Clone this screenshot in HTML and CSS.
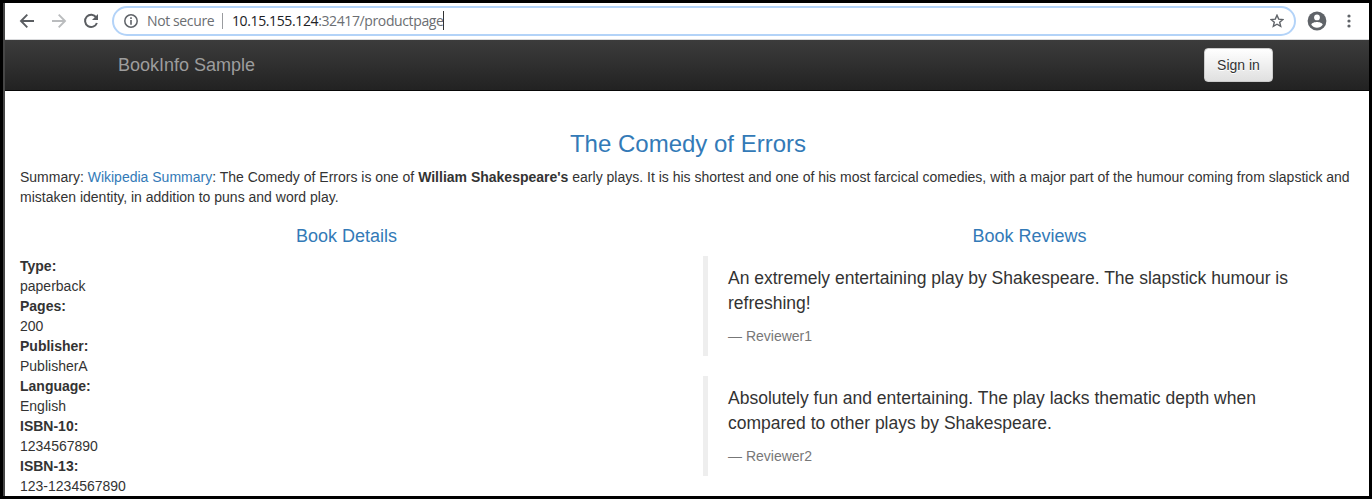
FILE: index.html
```html
<!DOCTYPE html>
<html lang="en">
<head>
<meta charset="utf-8">
<title>Simple Bookstore App</title>
<link rel="stylesheet" href="styles.css">
</head>
<body>
<div class="window">
  <div class="toolbar">
    <svg class="tool back" width="16" height="16" viewBox="0 0 16 16"><path d="M15 8H2M8.300 1.700 2 8l6.300 6.300" fill="none" stroke="#5a5d61" stroke-width="1.900"/></svg>
    <svg class="tool forward" width="16" height="16" viewBox="0 0 16 16"><path d="M1 8h13M7.700 1.700 14 8l-6.300 6.300" fill="none" stroke="#babcbe" stroke-width="1.900"/></svg>
    <svg class="tool reload" width="16" height="16" viewBox="0 0 16 16"><path d="M13.200 4.400A6.100 6.100 0 1 0 13.900 10" fill="none" stroke="#5a5d61" stroke-width="2"/><path d="M15 1V7H9z" fill="#5a5d61"/></svg>
    <div class="omnibox">
      <svg class="info" width="14" height="14" viewBox="0 0 14 14"><circle cx="7" cy="7" r="6.200" fill="none" stroke="#5f6368" stroke-width="1.500"/><path d="M6.200 3.300h1.600v1.600H6.200zM6.200 6.100h1.600v4.600H6.200z" fill="#5f6368"/></svg>
      <span class="security">Not secure</span>
      <span class="divider"></span>
      <span class="url"><span class="host">10.15.155.124</span>:32417/productpage</span>
      <span class="caret"></span>
      <svg class="star" width="14" height="14" viewBox="0 0 14 14"><path d="M7 1.200 8.700 5.100l4.200.4-3.200 2.800 1 4.100L7 10.200l-3.700 2.200 1-4.100L1.100 5.500l4.200-.4z" fill="none" stroke="#5f6368" stroke-width="1.400"/></svg>
    </div>
    <svg class="avatar" width="20" height="20" viewBox="0 0 20 20"><circle cx="10" cy="10" r="9.400" fill="#5f6368"/><circle cx="10" cy="6.400" r="2.900" fill="#fff"/><path d="M4.300 13.700C4.500 11.700 8 10.900 10 10.900s5.500.8 5.700 2.800A6.900 6.900 0 0 1 10 16.700a6.900 6.900 0 0 1-5.700-3z" fill="#fff"/></svg>
    <svg class="more" width="4" height="14" viewBox="0 0 4 14"><g fill="#5f6368"><circle cx="2" cy="2" r="1.600"/><circle cx="2" cy="7" r="1.600"/><circle cx="2" cy="12" r="1.600"/></g></svg>
  </div>
  <div class="page">
    <nav class="navbar">
      <div class="container">
        <a class="brand">BookInfo Sample</a>
        <button class="sign-in" type="button">Sign in</button>
      </div>
    </nav>
    <main class="content">
      <h3 class="title">The Comedy of Errors</h3>
      <p class="summary">Summary: <a class="link">Wikipedia Summary</a>: The Comedy of Errors is one of <b>William Shakespeare's</b> early plays. It is his shortest and one of his most farcical comedies, with a major part of the humour coming from slapstick and mistaken identity, in addition to puns and word play.</p>
      <div class="columns">
        <section class="column">
          <h4 class="heading">Book Details</h4>
          <dl class="details">
            <dt>Type:</dt><dd>paperback</dd>
            <dt>Pages:</dt><dd>200</dd>
            <dt>Publisher:</dt><dd>PublisherA</dd>
            <dt>Language:</dt><dd>English</dd>
            <dt>ISBN-10:</dt><dd>1234567890</dd>
            <dt>ISBN-13:</dt><dd>123-1234567890</dd>
          </dl>
        </section>
        <section class="column">
          <h4 class="heading">Book Reviews</h4>
          <blockquote class="review">
            <p>An extremely entertaining play by Shakespeare. The slapstick humour is refreshing!</p>
            <small>— Reviewer1</small>
          </blockquote>
          <blockquote class="review">
            <p>Absolutely fun and entertaining. The play lacks thematic depth when compared to other plays by Shakespeare.</p>
            <small>— Reviewer2</small>
          </blockquote>
        </section>
      </div>
    </main>
  </div>
</div>
</body>
</html>
```

FILE: styles.css
```css
* { box-sizing: border-box; }

body {
  margin: 0;
  height: 499px;
  padding: 3px;
  overflow: hidden;
  background: #000;
  color: #333;
  font: 14px/20px "Liberation Sans", Arial, sans-serif;
}

.window {
  height: 493px;
  overflow: hidden;
  border-left: 2px solid #464646;
  background: #fff;
}

/* Browser toolbar */
.toolbar {
  display: flex;
  align-items: center;
  height: 37px;
  padding: 0 18px 1px 14px;
  border-bottom: 1px solid #d8d9db;
}

.tool { flex: none; margin-right: 16px; }
.reload { margin-right: 13px; }

.omnibox {
  display: flex;
  flex: 1;
  align-items: center;
  height: 30px;
  padding: 0 10px;
  border: 2px solid #b3d3f8;
  border-radius: 15px;
  font: 14px/20px "Open Sans", "Noto Sans", sans-serif;
  letter-spacing: -0.38px;
  white-space: nowrap;
  color: #6b6e72;
}

.info { margin-right: 9px; }
.security { width: 67px; }
.divider { width: 1px; height: 16px; margin: 0 9px 0 8px; background: #9a9c9f; }
.url { width: 211px; }
.host { color: #202124; }
.caret { width: 1px; height: 19px; background: #333; }
.star { margin-left: auto; }
.avatar { margin-left: 11px; }
.more { margin-left: 20px; }

/* Bookstore page, slightly wider than the visible window */
.page { width: 1366px; }

.navbar {
  height: 51px;
  border-bottom: 1px solid #080808;
  background: linear-gradient(#3c3c3c, #222);
}

.container {
  display: flex;
  align-items: flex-start;
  justify-content: space-between;
  width: 1170px;
  margin: 0 auto;
  padding: 8px 0 0 15px;
}

.brand { padding-top: 7px; font-size: 18px; color: #9d9d9d; }

.sign-in {
  width: 69px;
  height: 34px;
  padding: 0;
  border: 1px solid #ccc;
  border-radius: 4px;
  background: linear-gradient(#fff, #e0e0e0);
  color: #333;
  font: inherit;
  text-shadow: 0 1px 0 #fff;
}

.content { padding: 40px 15px 0; }

.title, .heading {
  margin: 0 0 10px;
  font-weight: 500;
  text-align: center;
  color: #337ab7;
}

.title { font-size: 24px; line-height: 26px; }
.heading { font-size: 18px; line-height: 19px; }
.link { color: #337ab7; }
.summary { margin: 0 0 20px; }

.columns {
  display: grid;
  grid-template-columns: 1fr 1fr;
  column-gap: 30px;
}

.details { margin: 0; }
.details dt { font-weight: bold; }
.details dd { margin: 0; }

.review {
  margin: 0 0 20px;
  padding: 10px 20px;
  border-left: 5px solid #eee;
  font-size: 17.5px;
  line-height: 25px;
}

.review p { margin: 0 0 10px; }
.review small { display: block; font-size: 14px; line-height: 20px; color: #777; }
```
